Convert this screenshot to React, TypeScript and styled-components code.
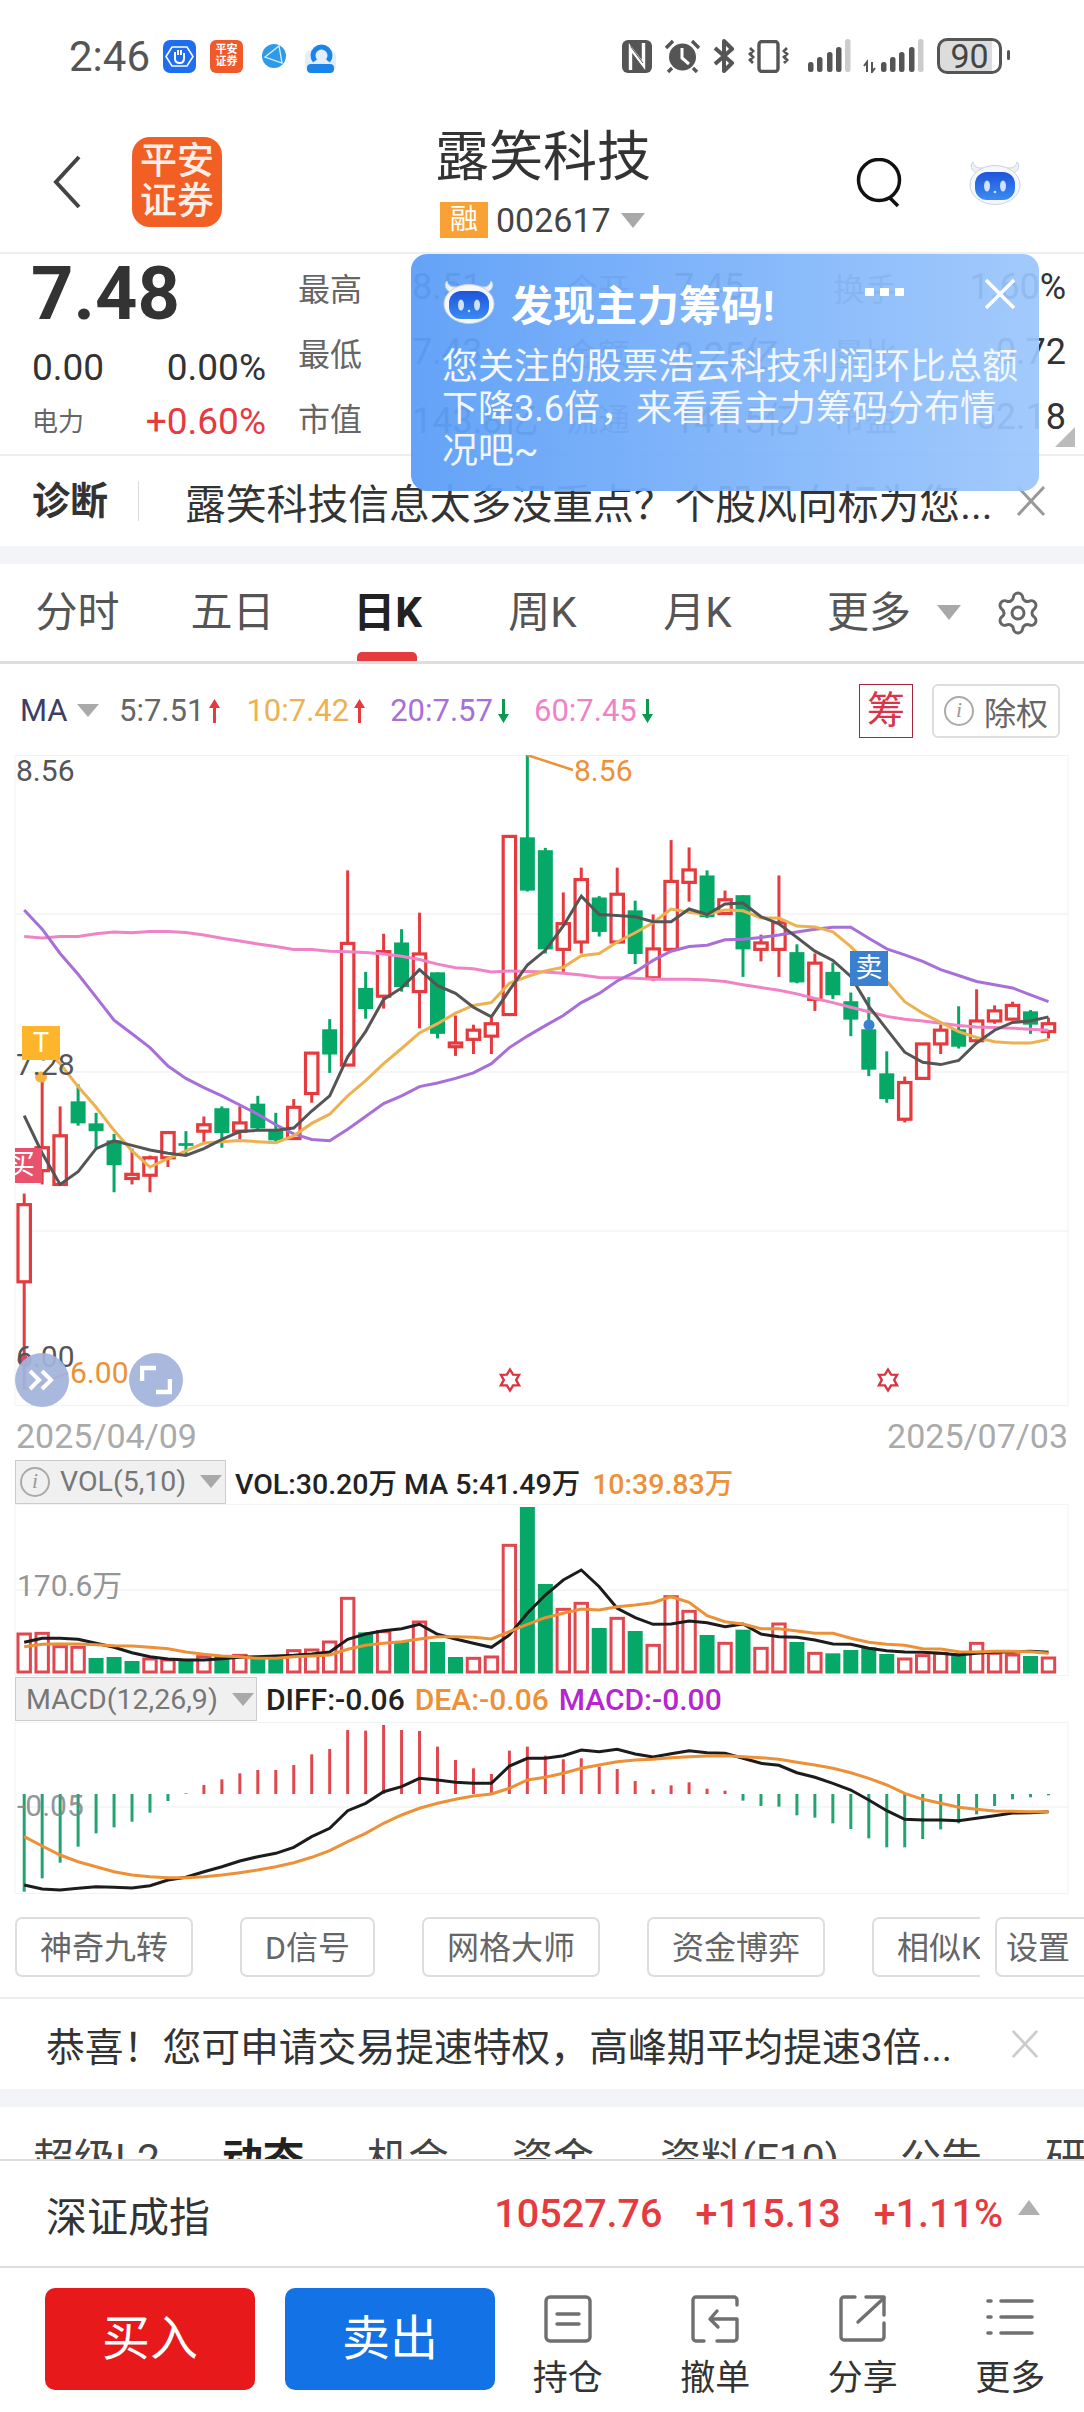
import * as React from "react";
import styled, { createGlobalStyle } from "styled-components";
import { Settings } from "lucide-react";

const GlobalStyle = createGlobalStyle`
  html, body {
    margin: 0;
    padding: 0;
    background: #fff;
  }
  * {
    box-sizing: border-box;
  }
`;

const RED = "#e53b3e";
const GREEN = "#06a868";
const ORANGE = "#ec9137";

// chart data was read off the reference: [isRed, high, bodyTop, bodyBottom, low]
const candles: number[][] = [
  [1, 988, 1012, 1180, 1415], [1, 735, 888, 938, 968], [1, 798, 862, 968, 968], [0, 750, 787, 835, 840],
  [0, 812, 835, 852, 890], [0, 858, 872, 926, 985], [1, 890, 946, 955, 968], [1, 905, 910, 948, 985],
  [1, 855, 855, 910, 930], [0, 852, 878, 884, 905], [1, 820, 838, 852, 880], [0, 798, 802, 856, 888],
  [1, 798, 834, 852, 870], [0, 775, 792, 846, 850], [0, 812, 848, 872, 875], [1, 782, 800, 868, 870],
  [1, 682, 682, 770, 790], [0, 608, 630, 685, 725], [1, 284, 443, 708, 708], [0, 505, 540, 586, 607],
  [1, 422, 461, 558, 585], [0, 412, 441, 538, 548], [1, 376, 466, 548, 628], [0, 506, 506, 640, 650],
  [1, 600, 660, 668, 688], [1, 620, 632, 652, 684], [1, 605, 618, 645, 684], [1, 210, 210, 598, 598],
  [0, 33, 212, 328, 330], [0, 235, 240, 456, 465], [1, 332, 400, 456, 505], [1, 278, 304, 440, 465],
  [0, 340, 343, 418, 428], [1, 278, 336, 440, 442], [0, 350, 371, 466, 488], [1, 380, 455, 518, 525],
  [1, 218, 308, 456, 460], [1, 234, 283, 310, 352], [0, 284, 295, 386, 388], [1, 328, 348, 378, 380],
  [0, 338, 338, 456, 516], [1, 424, 442, 456, 482], [1, 295, 398, 456, 516], [0, 445, 462, 528, 530],
  [1, 465, 486, 565, 590], [0, 485, 505, 556, 564], [0, 550, 569, 609, 645], [0, 560, 630, 718, 732],
  [0, 678, 726, 782, 790], [1, 733, 746, 826, 833], [1, 660, 662, 737, 737], [1, 620, 632, 662, 684],
  [0, 580, 630, 668, 672], [1, 543, 612, 655, 658], [1, 578, 590, 612, 618], [1, 570, 578, 608, 610],
  [0, 588, 591, 620, 640], [1, 605, 618, 635, 650]
];

const ma5 = [818, 900, 968, 940, 890, 873, 883, 893, 900, 905, 890, 870, 853, 850, 850, 845, 808, 775, 690, 635, 565, 540, 500, 535, 552, 582, 603, 545, 490, 458, 405, 340, 380, 382, 385, 396, 396, 368, 380, 357, 355, 385, 400, 430, 460, 480, 515, 580, 630, 680, 702, 707, 698, 660, 632, 615, 612, 603];
const ma10 = [670, 705, 755, 800, 850, 895, 930, 912, 895, 878, 875, 872, 875, 877, 862, 835, 815, 775, 742, 705, 672, 638, 618, 595, 578, 572, 530, 515, 503, 495, 470, 465, 440, 420, 398, 368, 375, 380, 370, 372, 388, 388, 405, 407, 418, 450, 490, 525, 570, 595, 615, 635, 648, 657, 660, 660, 652];
const ma20 = [370, 412, 465, 510, 560, 610, 640, 670, 710, 737, 757, 775, 795, 815, 838, 858, 870, 873, 848, 820, 792, 775, 755, 747, 737, 725, 705, 670, 645, 622, 600, 572, 552, 525, 505, 480, 460, 450, 447, 435, 434, 430, 425, 418, 412, 408, 408, 432, 455, 468, 482, 500, 513, 526, 533, 540, 555, 570];
const ma60 = [428, 431, 428, 428, 422, 418, 420, 417, 417, 419, 425, 432, 438, 444, 450, 456, 456, 460, 461, 463, 466, 471, 478, 488, 496, 498, 505, 503, 504, 505, 508, 512, 517, 518, 519, 521, 521, 521, 523, 526, 533, 539, 545, 553, 563, 572, 582, 592, 602, 608, 612, 617, 622, 625, 626, 628, 630, 632];

// [isRed, top]
const volumes: number[][] = [
  [1, 582], [1, 580], [1, 620], [1, 622], [0, 654], [0, 651], [0, 663], [1, 657], [1, 660], [0, 660],
  [1, 650], [0, 645], [1, 646], [0, 650], [0, 655], [1, 632], [1, 630], [1, 606], [1, 475], [0, 577],
  [1, 575], [0, 605], [1, 546], [0, 606], [0, 651], [1, 655], [1, 651], [1, 316], [0, 201], [0, 432],
  [1, 508], [1, 490], [0, 564], [1, 535], [0, 573], [1, 616], [1, 470], [1, 514], [0, 585], [1, 610],
  [0, 569], [1, 625], [1, 552], [0, 606], [1, 640], [0, 640], [0, 630], [0, 622], [0, 642], [1, 657],
  [1, 647], [1, 640], [0, 640], [1, 610], [1, 640], [1, 645], [0, 648], [1, 654]
];
const volMa5 = [607, 595, 595, 598, 610, 622, 638, 650, 657, 660, 660, 656, 652, 650, 648, 646, 642, 636, 598, 582, 572, 566, 553, 583, 597, 610, 622, 585, 520, 465, 420, 390, 440, 505, 533, 553, 552, 543, 548, 560, 552, 582, 590, 592, 600, 612, 613, 625, 632, 636, 637, 640, 645, 640, 636, 636, 634, 637];
const volMa10 = [620, 613, 612, 612, 614, 617, 618, 622, 626, 636, 643, 648, 650, 655, 655, 650, 648, 645, 628, 616, 610, 605, 597, 590, 590, 592, 597, 575, 553, 533, 520, 507, 510, 500, 495, 488, 470, 487, 527, 545, 552, 566, 566, 573, 580, 580, 595, 607, 613, 616, 626, 627, 635, 636, 634, 634, 635, 640];

const macdBars = [1355, 1315, 1268, 1220, 1180, 1162, 1145, 1118, 1083, 1060, 1035, 1018, 1000, 990, 990, 975, 943, 927, 870, 872, 855, 870, 873, 920, 960, 985, 1002, 932, 920, 947, 958, 955, 980, 987, 1023, 1048, 1036, 1027, 1046, 1052, 1082, 1098, 1100, 1126, 1133, 1150, 1167, 1195, 1222, 1222, 1197, 1168, 1150, 1123, 1098, 1078, 1072, 1066];
const diff = [1335, 1347, 1350, 1345, 1340, 1342, 1344, 1337, 1320, 1312, 1295, 1280, 1263, 1250, 1240, 1222, 1190, 1165, 1112, 1090, 1055, 1040, 1015, 1020, 1027, 1030, 1030, 978, 955, 955, 947, 930, 935, 928, 942, 951, 941, 932, 938, 940, 955, 970, 976, 998, 1012, 1030, 1050, 1080, 1112, 1138, 1140, 1140, 1142, 1135, 1127, 1119, 1118, 1115];
const dea = [1190, 1218, 1245, 1265, 1280, 1295, 1305, 1310, 1313, 1313, 1310, 1305, 1298, 1290, 1280, 1268, 1252, 1232, 1205, 1180, 1150, 1125, 1105, 1090, 1078, 1068, 1062, 1045, 1020, 1012, 1000, 985, 975, 965, 960, 958, 953, 950, 948, 947, 950, 953, 958, 967, 975, 985, 998, 1015, 1035, 1060, 1078, 1090, 1102, 1108, 1113, 1114, 1115, 1115];

const slotX = (i: number) => 24.2 + 17.97 * i;
const priceY = (z: number) => 740 + z / 2.178;
const lowerY = (z: number) => 1440 + z / 3;

const linePoints = (values: number[], toY: (z: number) => number, start = 0) =>
  values.map((v, i) => `${slotX(i + start).toFixed(1)},${toY(v).toFixed(1)}`).join(" ");

const starPoints = (cx: number, cy: number) => {
  const pts: string[] = [];
  for (let i = 0; i < 12; i++) {
    const r = i % 2 === 0 ? 10.5 : 6.2;
    const a = (Math.PI / 6) * i - Math.PI / 2;
    pts.push(`${(cx + r * Math.cos(a)).toFixed(1)},${(cy + r * Math.sin(a)).toFixed(1)}`);
  }
  return pts.join(" ");
};

const Page = styled.div`
  position: relative;
  width: 1084px;
  height: 2412px;
  overflow: hidden;
  background: #fff;
  font-family: Roboto, "Noto Sans CJK SC", sans-serif;
  color: #333;
`;

const StatusBar = styled.div`
  height: 112px;
  display: flex;
  align-items: center;
  padding: 0 0 0 69px;
`;
const Clock = styled.div`
  font-size: 42px;
  color: #555;
  width: 94px;
`;
const AppIcons = styled.div`
  display: flex;
  align-items: center;
  gap: 14px;
`;
const OrangeApp = styled.div`
  width: 33px;
  height: 33px;
  border-radius: 6px;
  background: #f0592a;
  color: #fff;
  font-size: 11px;
  line-height: 12px;
  font-weight: 700;
  text-align: center;
  padding-top: 4px;
`;
const StatusIcons = styled.div`
  margin-left: auto;
  margin-right: 82px;
  display: flex;
  align-items: center;
  gap: 12px;
`;
const Battery = styled.div`
  position: relative;
  width: 65px;
  height: 36px;
  margin-left: 1px;
  border: 3px solid #555;
  border-radius: 10px;
  background: linear-gradient(90deg, #dcdcdc 88%, #fff 88%);
  color: #444;
  font-size: 34px;
  line-height: 30px;
  text-align: center;
  &::after {
    content: "";
    position: absolute;
    right: -11px;
    top: 9px;
    width: 3px;
    height: 10px;
    background: #555;
    border-radius: 2px;
  }
`;

const Header = styled.header`
  height: 142px;
  display: flex;
  align-items: flex-start;
  border-bottom: 2px solid #eee;
  padding-left: 52px;
`;
const BackMark = styled.svg`
  width: 30px;
  height: 54px;
  margin-top: 43px;
`;
const Logo = styled.div`
  width: 90px;
  height: 90px;
  margin: 25px 0 0 50px;
  border-radius: 18px;
  background: #f15f25;
  color: #fdeee7;
  font-size: 37px;
  font-weight: 500;
  line-height: 40px;
  text-align: center;
  padding-top: 5px;
`;
const TitleBlock = styled.div`
  margin-left: 213px;
  width: 300px;
`;
const Title = styled.h1`
  margin: 14px 0 0;
  font-size: 54px;
  font-weight: 400;
  line-height: 64px;
  color: #333;
`;
const CodeRow = styled.div`
  display: flex;
  align-items: center;
  margin: 12px 0 0 5px;
`;
const MarginTag = styled.span`
  width: 48px;
  height: 36px;
  background: #f9a134;
  color: #fff;
  font-size: 28px;
  line-height: 36px;
  text-align: center;
`;
const Code = styled.span`
  margin-left: 8px;
  font-size: 34px;
  line-height: 36px;
  color: #444;
`;
const Caret = styled.i<{ $size?: number; $color?: string; $gap?: number }>`
  display: inline-block;
  flex: none;
  width: 0;
  height: 0;
  margin-left: ${(p) => p.$gap ?? 10}px;
  border-left: ${(p) => p.$size ?? 12}px solid transparent;
  border-right: ${(p) => p.$size ?? 12}px solid transparent;
  border-top: ${(p) => (p.$size ?? 12) * 1.25}px solid ${(p) => p.$color ?? "#a9a9a9"};
`;
const HeaderActions = styled.div`
  margin-left: auto;
  margin-right: 62px;
  display: flex;
  align-items: center;
  gap: 64px;
  padding-top: 46px;
`;

const Quote = styled.section`
  position: relative;
  height: 202px;
  display: flex;
  border-bottom: 2px solid #eee;
  padding-left: 32px;
`;
const PriceBlock = styled.div`
  width: 234px;
  margin-right: 32px;
`;
const Price = styled.div`
  font-size: 74px;
  font-weight: 700;
  line-height: 76px;
  margin: 2px 0 0 -1px;
  color: #333;
`;
const ChangeRow = styled.div`
  display: flex;
  justify-content: space-between;
  align-items: center;
  color: #333;
  font-size: 37px;
  line-height: 44px;
  margin-top: 14px;
`;
const SectorRow = styled.div`
  display: flex;
  justify-content: space-between;
  align-items: center;
  line-height: 44px;
  margin-top: 10px;
`;
const SectorName = styled.span`
  font-size: 26px;
  color: #666;
`;
const SectorRise = styled.span`
  font-size: 37px;
  color: ${RED};
`;
const QuoteGrid = styled.div`
  width: 768px;
  display: grid;
  grid-template-columns: 114px 154px 108px 159px 90px 143px;
  grid-auto-rows: 65px;
  align-items: center;
`;
const QuoteLabel = styled.span`
  font-size: 32px;
  color: #666;
`;
const QuoteValue = styled.span<{ $end?: boolean }>`
  font-size: 36px;
  color: #333;
  text-align: ${(p) => (p.$end ? "right" : "left")};
`;
const CornerMark = styled.i`
  position: absolute;
  right: 9px;
  bottom: 7px;
  width: 20px;
  height: 20px;
  background: #bbb;
  clip-path: polygon(100% 0, 100% 100%, 0 100%);
`;

const Diagnosis = styled.section`
  height: 90px;
  display: flex;
  align-items: center;
  padding: 0 37px 0 32px;
  font-size: 40.8px;
  color: #333;
`;
const DiagnosisTag = styled.strong`
  font-size: 38px;
  font-weight: 700;
  padding-right: 30px;
  border-right: 1px solid #ddd;
  line-height: 40px;
`;
const DiagnosisText = styled.span`
  margin-left: 46px;
  white-space: nowrap;
`;
const CloseIcon = styled.svg<{ $push?: boolean }>`
  flex: none;
  margin-left: ${(p) => (p.$push ? "auto" : "0")};
`;
const Band = styled.div`
  height: 18px;
  background: #f3f4f8;
`;

const TabBar = styled.nav`
  height: 100px;
  display: flex;
  align-items: center;
  border-bottom: 3px solid #ddd;
`;
const Tab = styled.div<{ $active?: boolean }>`
  position: relative;
  width: 155px;
  text-align: center;
  font-size: 42px;
  line-height: 60px;
  color: ${(p) => (p.$active ? "#222" : "#555")};
  font-weight: ${(p) => (p.$active ? 700 : 400)};
  &::after {
    content: "";
    display: ${(p) => (p.$active ? "block" : "none")};
    position: absolute;
    left: 50%;
    margin-left: -31px;
    bottom: -18px;
    width: 60px;
    height: 9px;
    border-radius: 5px 5px 0 0;
    background: ${RED};
  }
`;
const MoreTab = styled.div`
  margin-left: 52px;
  font-size: 42px;
  line-height: 60px;
  color: #555;
  width: 80px;
  white-space: nowrap;
`;
const GearWrap = styled.div`
  margin-left: 33px;
  display: flex;
  color: #666;
`;

const MaRow = styled.div`
  height: 91px;
  display: flex;
  align-items: center;
  padding: 2px 24px 0 20px;
  font-size: 31px;
`;
const MaName = styled.span`
  color: #3d3d66;
  width: 45px;
`;
const MaValue = styled.span<{ $color: string; $gap: number }>`
  color: ${(p) => p.$color};
  margin-left: ${(p) => p.$gap}px;
  white-space: nowrap;
`;
const ArrowMark = styled.svg`
  flex: none;
  margin-left: 4px;
`;
const ChipButton = styled.div`
  margin-left: auto;
  width: 54px;
  height: 54px;
  border: 1px solid #a8263c;
  color: #d8354a;
  font-size: 38px;
  line-height: 50px;
  text-align: center;
`;
const RightButton = styled.div`
  margin-left: 19px;
  width: 128px;
  height: 54px;
  border: 2px solid #ddd;
  border-radius: 6px;
  display: flex;
  align-items: center;
  justify-content: center;
  gap: 10px;
  color: #666;
  font-size: 32px;
`;
const InfoMark = styled.i<{ $size: number }>`
  flex: none;
  display: inline-flex;
  align-items: center;
  justify-content: center;
  width: ${(p) => p.$size}px;
  height: ${(p) => p.$size}px;
  border: 2px solid #aaa;
  border-radius: 50%;
  color: #999;
  font-family: "Liberation Serif", serif;
  font-size: ${(p) => p.$size * 0.72}px;
  font-style: italic;
`;

const ChartArea = styled.div`
  position: relative;
  height: 651px;
`;
const ChartSvg = styled.svg`
  display: block;
`;
const AxisLabel = styled.span<{ $x: number; $y: number; $color?: string }>`
  position: absolute;
  left: ${(p) => p.$x}px;
  top: ${(p) => p.$y}px;
  font-size: 30px;
  line-height: 30px;
  color: ${(p) => p.$color ?? "#555"};
`;
const Signal = styled.span<{ $x: number; $y: number; $w: number; $h: number; $color: string; $clip?: boolean }>`
  position: absolute;
  left: ${(p) => p.$x}px;
  top: ${(p) => p.$y}px;
  width: ${(p) => p.$w}px;
  height: ${(p) => p.$h}px;
  background: ${(p) => p.$color};
  color: #fff;
  font-size: 27px;
  line-height: ${(p) => p.$h}px;
  display: flex;
  justify-content: ${(p) => (p.$clip ? "flex-start" : "center")};
  overflow: hidden;
`;
const ClippedGlyph = styled.span`
  flex: none;
  margin-left: -7px;
`;
const RoundControl = styled.div<{ $x: number }>`
  position: absolute;
  left: ${(p) => p.$x}px;
  top: 598px;
  width: 54px;
  height: 54px;
  border-radius: 50%;
  background: rgba(163, 180, 219, 0.93);
  display: flex;
  align-items: center;
  justify-content: center;
`;
const DateRow = styled.div`
  height: 53px;
  display: flex;
  justify-content: space-between;
  padding: 12px 16px 0;
  font-size: 34px;
  line-height: 36px;
  color: #aaa;
`;
const LegendRow = styled.div<{ $h: number; $size: number }>`
  height: ${(p) => p.$h}px;
  display: flex;
  align-items: center;
  padding-left: 15px;
  font-size: ${(p) => p.$size}px;
`;
const IndicatorBox = styled.div<{ $w: number; $inset: number }>`
  width: ${(p) => p.$w}px;
  height: 44px;
  flex: none;
  display: flex;
  align-items: center;
  gap: 10px;
  padding-left: ${(p) => p.$inset}px;
  background: #f0f0f0;
  border: 1px solid #ccc;
  color: #777;
  margin-right: 9px;
`;
const IndicatorName = styled.span`
  font-size: 28.5px;
  white-space: nowrap;
`;
const LegendText = styled.span<{ $color?: string; $gap?: number }>`
  color: ${(p) => p.$color ?? "#222"};
  margin-left: ${(p) => p.$gap ?? 0}px;
  white-space: nowrap;
  font-weight: 500;
`;
const LowerChart = styled.div`
  position: relative;
  height: 172px;
`;
const LowerLabel = styled.span<{ $y: number }>`
  position: absolute;
  left: 17px;
  top: ${(p) => p.$y}px;
  font-size: 30px;
  line-height: 30px;
  color: rgba(130, 130, 130, 0.85);
`;

const ToolRow = styled.div`
  display: flex;
  padding: 23px 0 0 15px;
  height: 105px;
  border-bottom: 2px solid #eee;
  overflow: hidden;
`;
const Tool = styled.div`
  height: 60px;
  padding: 0 23px;
  margin-right: 47px;
  flex: none;
  border: 2px solid #ddd;
  border-radius: 7px;
  color: #666;
  font-size: 32px;
  line-height: 58px;
  white-space: nowrap;
`;
const ClippedTool = styled(Tool)`
  width: 108px;
  margin-right: 15px;
  overflow: hidden;
  border-right: 0;
  border-radius: 7px 0 0 7px;
`;
const SettingTool = styled(Tool)`
  width: 100px;
  padding: 0 9px;
  margin-right: 0;
`;
const Notice = styled.div`
  height: 90px;
  display: flex;
  align-items: center;
  padding: 0 44px 0 46px;
  font-size: 38.8px;
  color: #333;
  white-space: nowrap;
`;
const SubTabs = styled.div`
  height: 52px;
  overflow: hidden;
  display: flex;
  padding: 24px 0 0 33px;
  font-size: 41px;
  line-height: 56px;
  color: #444;
  white-space: nowrap;
`;
const SubTab = styled.span<{ $w: number; $active?: boolean }>`
  flex: none;
  width: ${(p) => p.$w}px;
  font-weight: ${(p) => (p.$active ? 700 : 400)};
  color: ${(p) => (p.$active ? "#222" : "#444")};
`;
const IndexBar = styled.div`
  height: 107px;
  display: flex;
  align-items: center;
  border-top: 2px solid #ddd;
  padding: 0 44px 0 46px;
`;
const IndexName = styled.span`
  font-size: 41px;
  color: #333;
`;
const IndexFigure = styled.span<{ $first?: boolean }>`
  margin-left: ${(p) => (p.$first ? "auto" : "33px")};
  font-size: 39.5px;
  font-weight: 500;
  color: ${RED};
`;
const UpMark = styled.i`
  width: 0;
  height: 0;
  margin: 0 0 12px 15px;
  border-left: 11px solid transparent;
  border-right: 11px solid transparent;
  border-bottom: 15px solid #b0b0b0;
`;
const ActionBar = styled.div`
  height: 144px;
  display: flex;
  align-items: flex-start;
  border-top: 2px solid #ddd;
  padding: 20px 0 0 45px;
`;
const TradeButton = styled.div<{ $color: string }>`
  flex: none;
  width: 210px;
  height: 102px;
  margin-right: 30px;
  border-radius: 10px;
  background: ${(p) => p.$color};
  color: #fff;
  font-size: 48px;
  line-height: 102px;
  text-align: center;
`;
const ActionItem = styled.div<{ $first?: boolean }>`
  width: 147.5px;
  margin-left: ${(p) => (p.$first ? "-31px" : "0")};
  display: flex;
  flex-direction: column;
  align-items: center;
  padding-top: 7px;
  font-size: 35px;
  line-height: 40px;
  color: #333;
`;
const ActionIcon = styled.svg`
  display: block;
  margin-bottom: 16px;
`;

const Tip = styled.aside`
  position: absolute;
  left: 411px;
  top: 254px;
  width: 628px;
  height: 237px;
  border-radius: 16px;
  background: linear-gradient(90deg, rgba(92, 158, 247, 0.95), rgba(155, 198, 252, 0.93));
  color: #fff;
  padding: 23px 20px 0 31px;
`;
const TipHead = styled.div`
  display: flex;
  align-items: center;
  height: 50px;
`;
const TipTitle = styled.strong`
  margin-left: 15px;
  font-size: 42px;
  font-weight: 700;
`;
const TipDots = styled.span`
  position: absolute;
  left: 454px;
  top: 34px;
  display: flex;
  gap: 6px;
  & > i {
    width: 9px;
    height: 8px;
    background: #fff;
  }
`;
const TipClose = styled.svg`
  position: absolute;
  left: 573px;
  top: 24px;
`;
const TipBody = styled.p`
  margin: 19px 0 0;
  font-size: 36px;
  line-height: 42px;
  white-space: nowrap;
  color: #f2f7ff;
`;

function Close(props: { size: number; color: string; push?: boolean }) {
  return (
    <CloseIcon $push={props.push} width={props.size} height={props.size} viewBox="0 0 32 32">
      <path d="M3 2L29 30M29 2L3 30" stroke={props.color} strokeWidth="3" fill="none" />
    </CloseIcon>
  );
}

function Robot({ size }: { size: number }) {
  const gradId = `robot-screen-${size}`;
  return (
    <svg width={size} height={(size * 44) / 54} viewBox="0 0 54 44">
      <defs>
        <linearGradient id={gradId} x1="0" y1="0" x2="0" y2="1">
          <stop offset="0" stopColor="#1d54db" />
          <stop offset="1" stopColor="#3b8bf2" />
        </linearGradient>
      </defs>
      <path d="M5 1c-3 3-2 8 3 11h38c5-3 6-8 3-11-1 4-4 6-7 6H12C9 7 6 5 5 1z" fill="#eef2f7" stroke="#c9d2e0" />
      <ellipse cx="27" cy="24" rx="25" ry="19.5" fill="#f5f7fb" stroke="#cbd3e2" />
      <rect x="7" y="11" width="40" height="28" rx="12" fill={`url(#${gradId})`} />
      <ellipse cx="19" cy="25" rx="3" ry="5.5" fill="#cfe2ff" />
      <ellipse cx="35" cy="25" rx="3" ry="5.5" fill="#cfe2ff" />
      <circle cx="27" cy="31" r="1.3" fill="#cfe2ff" />
    </svg>
  );
}

function StatusGlyphs() {
  return (
    <StatusIcons>
      <svg width="30" height="33" viewBox="0 0 30 33">
        <rect x="0" y="0" width="30" height="33" rx="6" fill="#555" />
        <path d="M8.5 30V8l13 17V3" stroke="#fff" strokeWidth="3.4" fill="none" />
        <path d="M9 3v4l12 16" stroke="#555" strokeWidth="1" fill="none" />
      </svg>
      <svg width="37" height="34" viewBox="0 0 37 34">
        <circle cx="18.5" cy="18" r="13.5" fill="#555" />
        <path d="M18 9v10l7 6" stroke="#fff" strokeWidth="3" fill="none" />
        <path d="M2 9l7-7M35 9l-7-7M8 29l-4 4M29 29l4 4" stroke="#555" strokeWidth="3.4" fill="none" />
      </svg>
      <svg width="22" height="34" viewBox="0 0 22 34">
        <path d="M2 9l17 15-8 8V2l8 8L2 25" stroke="#555" strokeWidth="4" fill="none" strokeLinejoin="round" />
      </svg>
      <svg width="43" height="33" viewBox="0 0 43 33">
        <rect x="12" y="1.5" width="19" height="30" rx="3" stroke="#555" strokeWidth="3.4" fill="none" />
        <path d="M3 8l3 3-3 3 3 3-3 3 3 3M40 8l-3 3 3 3-3 3 3 3-3 3" stroke="#555" strokeWidth="2.8" fill="none" />
      </svg>
      <svg width="43" height="34" viewBox="0 0 43 34" style={{ marginLeft: 6 }}>
        <g fill="#555">
          <rect x="0" y="23" width="5.5" height="10" rx="2.5" />
          <rect x="9" y="18" width="5.5" height="15" rx="2.5" />
          <rect x="19" y="13" width="5.5" height="20" rx="2.5" />
          <rect x="28" y="8" width="5.5" height="25" rx="2.5" />
        </g>
        <rect x="37" y="0" width="5.5" height="33" rx="2.5" fill="#ccc" />
      </svg>
      <svg width="61" height="34" viewBox="0 0 61 34">
        <path d="M4 33V23l-3 4M9 23v10l3-4" stroke="#555" strokeWidth="2" fill="none" />
        <g fill="#555">
          <rect x="18" y="23" width="5.5" height="10" rx="2.5" />
          <rect x="27" y="18" width="5.5" height="15" rx="2.5" />
          <rect x="36" y="13" width="5.5" height="20" rx="2.5" />
          <rect x="46" y="8" width="5.5" height="25" rx="2.5" />
        </g>
        <rect x="55" y="0" width="5.5" height="33" rx="2.5" fill="#ccc" />
      </svg>
      <Battery>90</Battery>
    </StatusIcons>
  );
}

function PriceChart() {
  return (
    <ChartArea>
      <ChartSvg width="1084" height="651" viewBox="0 755 1084 651">
        <rect x="15" y="755.5" width="1053" height="650" fill="none" stroke="#f3f3f3" />
        {[914, 1072, 1231].map((y) => (
          <line key={y} x1="15" x2="1068" y1={y} y2={y} stroke="#f3f3f3" strokeWidth="1.5" />
        ))}
        {candles.map(([up, high, top, bottom, low], i) => {
          const x = slotX(i);
          const color = up ? RED : GREEN;
          return (
            <g key={i}>
              <line x1={x} x2={x} y1={priceY(high)} y2={priceY(low)} stroke={color} strokeWidth="3" />
              {up ? (
                <rect x={x - 6.2} y={priceY(top)} width="12.4" height={priceY(bottom) - priceY(top)} fill="#fff" stroke={color} strokeWidth="3.2" />
              ) : (
                <rect x={x - 7.5} y={priceY(top)} width="15" height={priceY(bottom) - priceY(top)} fill={color} />
              )}
            </g>
          );
        })}
        <polyline points={linePoints(ma60, priceY)} fill="none" stroke="#ef83c6" strokeWidth="3" />
        <polyline points={linePoints(ma20, priceY)} fill="none" stroke="#a86fd8" strokeWidth="3" />
        <polyline points={linePoints(ma10, priceY, 1)} fill="none" stroke="#edb24f" strokeWidth="3" />
        <polyline points={linePoints(ma5, priceY)} fill="none" stroke="#555" strokeWidth="3" />
        <polyline points="527,755 573,770" fill="none" stroke={ORANGE} strokeWidth="2.5" />
        <polyline points="24,1390 68,1373" fill="none" stroke={ORANGE} strokeWidth="2.5" />
        <ellipse cx="41" cy="1077" rx="6" ry="5.5" fill="#f5b33c" />
        <ellipse cx="869" cy="1025" rx="5.5" ry="5.5" fill="#3a80d0" />
        <ellipse cx="23" cy="1360" rx="5.5" ry="5.5" fill="#d9486a" />
        <polygon points={starPoints(510, 1380)} fill="#fff" stroke="#d93440" strokeWidth="2.4" />
        <polygon points={starPoints(888, 1380)} fill="#fff" stroke="#d93440" strokeWidth="2.4" />
      </ChartSvg>
      <AxisLabel $x={16} $y={1}>8.56</AxisLabel>
      <AxisLabel $x={16} $y={295}>7.28</AxisLabel>
      <AxisLabel $x={16} $y={587}>6.00</AxisLabel>
      <AxisLabel $x={574} $y={1} $color={ORANGE}>8.56</AxisLabel>
      <AxisLabel $x={70} $y={603} $color={ORANGE}>6.00</AxisLabel>
      <Signal $x={22} $y={271} $w={38} $h={34} $color="#fdb52c">T</Signal>
      <Signal $x={15} $y={393} $w={27} $h={35} $color="#e8526c" $clip>
        <ClippedGlyph>买</ClippedGlyph>
      </Signal>
      <Signal $x={850} $y={196} $w={38} $h={35} $color="#3a80d0">卖</Signal>
      <RoundControl $x={15}>
        <svg width="30" height="22" viewBox="0 0 30 22">
          <path d="M3 2l9 9-9 9M15 2l9 9-9 9" stroke="#fff" strokeWidth="4" fill="none" />
        </svg>
      </RoundControl>
      <RoundControl $x={129}>
        <svg width="32" height="30" viewBox="0 0 32 30">
          <path d="M2 16V3h14M30 14v13H16" stroke="#fff" strokeWidth="4.5" fill="none" />
        </svg>
      </RoundControl>
    </ChartArea>
  );
}

function VolumeChart() {
  return (
    <LowerChart>
      <ChartSvg width="1084" height="172" viewBox="0 1504 1084 172">
        <rect x="15" y="1504.5" width="1053" height="171" fill="none" stroke="#f3f3f3" />
        <line x1="15" x2="1068" y1="1590" y2="1590" stroke="#f3f3f3" strokeWidth="1.5" />
        {volumes.map(([up, top], i) => {
          const x = slotX(i);
          const y = lowerY(top);
          return up ? (
            <rect key={i} x={x - 6.2} y={y} width="12.4" height={1672 - y} fill="#fff" stroke="#e0474f" strokeWidth="3" />
          ) : (
            <rect key={i} x={x - 7.5} y={y} width="15" height={1673.5 - y} fill={GREEN} />
          );
        })}
        <polyline points={linePoints(volMa5, lowerY)} fill="none" stroke="#1c1c1c" strokeWidth="3" />
        <polyline points={linePoints(volMa10, lowerY)} fill="none" stroke={ORANGE} strokeWidth="3" />
      </ChartSvg>
      <LowerLabel $y={67}>170.6万</LowerLabel>
    </LowerChart>
  );
}

function MacdChart() {
  const zero = 1062;
  return (
    <LowerChart>
      <ChartSvg width="1084" height="172" viewBox="0 1722 1084 172">
        <rect x="15" y="1722.5" width="1053" height="171" fill="none" stroke="#f3f3f3" />
        <line x1="15" x2="1068" y1="1807" y2="1807" stroke="#f3f3f3" strokeWidth="1.5" />
        {macdBars.map((z, i) => (
          <line
            key={i}
            x1={slotX(i)}
            x2={slotX(i)}
            y1={lowerY(zero)}
            y2={lowerY(z)}
            stroke={z > zero ? "#22a471" : "#e0474f"}
            strokeWidth="3"
          />
        ))}
        <polyline points={linePoints(diff, lowerY)} fill="none" stroke="#1c1c1c" strokeWidth="3" />
        <polyline points={linePoints(dea, lowerY)} fill="none" stroke={ORANGE} strokeWidth="3" />
      </ChartSvg>
      <LowerLabel $y={69}>-0.05</LowerLabel>
    </LowerChart>
  );
}

function Arrow({ up }: { up: boolean }) {
  const color = up ? "#e53b3e" : "#0c9a4e";
  return (
    <ArrowMark width="13" height="26" viewBox="0 0 13 26">
      {up ? (
        <path d="M6.5 1L12 10H8v15H5V10H1z" fill={color} />
      ) : (
        <path d="M6.5 25L12 16H8V1H5v15H1z" fill={color} />
      )}
    </ArrowMark>
  );
}

export default function App(): React.ReactElement {
  return (
    <Page>
      <GlobalStyle />
      <StatusBar>
        <Clock>2:46</Clock>
        <AppIcons>
          <svg width="33" height="33" viewBox="0 0 33 33">
            <rect width="33" height="33" rx="7" fill="#1f6df0" />
            <path d="M9 7h15l6 9.5-6 9.5H9l-6-9.5z" fill="none" stroke="#fff" strokeWidth="1.6" />
            <path d="M12 16v-4M15 15v-5M18 15v-5M21 16v-3M12 15v4c0 3 2 4 5 4s4-2 4-5v-3" stroke="#fff" strokeWidth="2" fill="none" />
          </svg>
          <OrangeApp>平安<br />证券</OrangeApp>
          <svg width="24" height="26" viewBox="0 0 24 26" style={{ marginLeft: 5 }}>
            <circle cx="12" cy="13" r="12" fill="#2f9be8" />
            <path d="M3 14L17 3l3 17z" fill="none" stroke="#d8f0ff" strokeWidth="1.3" />
          </svg>
          <svg width="33" height="33" viewBox="0 0 33 33" style={{ marginLeft: 4 }}>
            <rect x="1" y="10" width="31" height="22" rx="6" fill="#e3eefa" />
            <path d="M11 21a8.5 8.5 0 1 1 13 0" stroke="#1c84e8" strokeWidth="5" fill="none" />
            <rect x="3" y="24" width="27" height="9" rx="4" fill="#1c84e8" />
          </svg>
        </AppIcons>
        <StatusGlyphs />
      </StatusBar>

      <Header>
        <BackMark viewBox="0 0 30 54">
          <path d="M27 2L4 27l23 25" stroke="#444" strokeWidth="4" fill="none" />
        </BackMark>
        <Logo>平安<br />证券</Logo>
        <TitleBlock>
          <Title>露笑科技</Title>
          <CodeRow>
            <MarginTag>融</MarginTag>
            <Code>002617</Code>
            <Caret $size={12} $gap={10} />
          </CodeRow>
        </TitleBlock>
        <HeaderActions>
          <svg width="48" height="50" viewBox="0 0 48 50">
            <circle cx="23" cy="22" r="20.5" fill="none" stroke="#111" strokeWidth="3.5" />
            <path d="M34 40l8 8" stroke="#111" strokeWidth="3.5" />
          </svg>
          <Robot size={54} />
        </HeaderActions>
      </Header>

      <Quote>
        <PriceBlock>
          <Price>7.48</Price>
          <ChangeRow>
            <span>0.00</span>
            <span>0.00%</span>
          </ChangeRow>
          <SectorRow>
            <SectorName>电力</SectorName>
            <SectorRise>+0.60%</SectorRise>
          </SectorRow>
        </PriceBlock>
        <QuoteGrid>
          <QuoteLabel>最高</QuoteLabel>
          <QuoteValue>8.51</QuoteValue>
          <QuoteLabel>今开</QuoteLabel>
          <QuoteValue>7.45</QuoteValue>
          <QuoteLabel>换手</QuoteLabel>
          <QuoteValue $end>1.60%</QuoteValue>
          <QuoteLabel>最低</QuoteLabel>
          <QuoteValue>7.43</QuoteValue>
          <QuoteLabel>金额</QuoteLabel>
          <QuoteValue>2.25亿</QuoteValue>
          <QuoteLabel>量比</QuoteLabel>
          <QuoteValue $end>0.72</QuoteValue>
          <QuoteLabel>市值</QuoteLabel>
          <QuoteValue>143.8亿</QuoteValue>
          <QuoteLabel>流通</QuoteLabel>
          <QuoteValue>141.5亿</QuoteValue>
          <QuoteLabel>市盈</QuoteLabel>
          <QuoteValue $end>52.18</QuoteValue>
        </QuoteGrid>
        <CornerMark />
      </Quote>

      <Diagnosis>
        <DiagnosisTag>诊断</DiagnosisTag>
        <DiagnosisText>露笑科技信息太多没重点？个股风向标为您...</DiagnosisText>
        <Close size={32} color="#999" push />
      </Diagnosis>
      <Band />

      <TabBar>
        <Tab>分时</Tab>
        <Tab>五日</Tab>
        <Tab $active>日K</Tab>
        <Tab>周K</Tab>
        <Tab>月K</Tab>
        <MoreTab>更多</MoreTab>
        <Caret $size={12} $gap={30} />
        <GearWrap>
          <Settings size={48} strokeWidth={1.5} />
        </GearWrap>
      </TabBar>

      <MaRow>
        <MaName>MA</MaName>
        <Caret $size={11} $gap={12} />
        <MaValue $color="#666" $gap={20}>5:7.51</MaValue>
        <Arrow up />
        <MaValue $color="#edb24f" $gap={25}>10:7.42</MaValue>
        <Arrow up />
        <MaValue $color="#a86fd8" $gap={24}>20:7.57</MaValue>
        <Arrow up={false} />
        <MaValue $color="#ef83c6" $gap={24}>60:7.45</MaValue>
        <Arrow up={false} />
        <ChipButton>筹</ChipButton>
        <RightButton>
          <InfoMark $size={30}>i</InfoMark>
          除权
        </RightButton>
      </MaRow>

      <PriceChart />
      <DateRow>
        <span>2025/04/09</span>
        <span>2025/07/03</span>
      </DateRow>

      <LegendRow $h={45} $size={28.5}>
        <IndicatorBox $w={211} $inset={4}>
          <InfoMark $size={30}>i</InfoMark>
          <IndicatorName>VOL(5,10)</IndicatorName>
          <Caret $size={11} $gap={4} />
        </IndicatorBox>
        <LegendText>VOL:30.20万 MA 5:41.49万</LegendText>
        <LegendText $color={ORANGE} $gap={12}>10:39.83万</LegendText>
      </LegendRow>
      <VolumeChart />

      <LegendRow $h={46} $size={30}>
        <IndicatorBox $w={242} $inset={10}>
          <IndicatorName>MACD(12,26,9)</IndicatorName>
          <Caret $size={11} $gap={4} />
        </IndicatorBox>
        <LegendText>DIFF:-0.06</LegendText>
        <LegendText $color={ORANGE} $gap={10}>DEA:-0.06</LegendText>
        <LegendText $color="#b626cf" $gap={10}>MACD:-0.00</LegendText>
      </LegendRow>
      <MacdChart />

      <ToolRow>
        <Tool>神奇九转</Tool>
        <Tool>D信号</Tool>
        <Tool>网格大师</Tool>
        <Tool>资金博弈</Tool>
        <ClippedTool>相似K线</ClippedTool>
        <SettingTool>设置</SettingTool>
      </ToolRow>
      <Notice>
        恭喜！您可申请交易提速特权，高峰期平均提速3倍...
        <Close size={30} color="#ccc" push />
      </Notice>
      <Band />
      <SubTabs>
        <SubTab $w={189}>超级L2</SubTab>
        <SubTab $w={145} $active>动态</SubTab>
        <SubTab $w={145}>机会</SubTab>
        <SubTab $w={148}>资金</SubTab>
        <SubTab $w={240}>资料(F10)</SubTab>
        <SubTab $w={145}>公告</SubTab>
        <SubTab $w={90}>研报</SubTab>
      </SubTabs>

      <IndexBar>
        <IndexName>深证成指</IndexName>
        <IndexFigure $first>10527.76</IndexFigure>
        <IndexFigure>+115.13</IndexFigure>
        <IndexFigure>+1.11%</IndexFigure>
        <UpMark />
      </IndexBar>

      <ActionBar>
        <TradeButton $color="#e8191b">买入</TradeButton>
        <TradeButton $color="#1272e6">卖出</TradeButton>
        <ActionItem $first>
          <ActionIcon width="48" height="48" viewBox="0 0 48 48" fill="none" stroke="#707070" strokeWidth="3.4" strokeLinecap="round">
            <rect x="2" y="2" width="44" height="44" rx="4" />
            <path d="M13 19h22M13 29h22" />
          </ActionIcon>
          持仓
        </ActionItem>
        <ActionItem>
          <ActionIcon width="48" height="48" viewBox="0 0 48 48" fill="none" stroke="#707070" strokeWidth="3.4" strokeLinecap="round" strokeLinejoin="round">
            <path d="M46 10V5a3 3 0 0 0-3-3H5a3 3 0 0 0-3 3v38a3 3 0 0 0 3 3h8" />
            <path d="M26 46h17a3 3 0 0 0 3-3V24H20" />
            <path d="M26 16l-7 8 8 8" />
          </ActionIcon>
          撤单
        </ActionItem>
        <ActionItem>
          <ActionIcon width="48" height="48" viewBox="0 0 48 48" fill="none" stroke="#707070" strokeWidth="3.4" strokeLinecap="round" strokeLinejoin="round">
            <path d="M16 2H5a3 3 0 0 0-3 3v37a3 3 0 0 0 3 3h37a3 3 0 0 0 3-3V28" />
            <path d="M19 27L45 3" />
            <path d="M27 2h18v18" />
          </ActionIcon>
          分享
        </ActionItem>
        <ActionItem>
          <ActionIcon width="48" height="48" viewBox="0 0 48 48" fill="none" stroke="#707070" strokeWidth="3.6" strokeLinecap="round">
            <path d="M2 6h3M2 22h3M2 38h3" />
            <path d="M15 6h31M15 22h31M15 38h31" />
          </ActionIcon>
          更多
        </ActionItem>
      </ActionBar>

      <Tip>
        <TipHead>
          <Robot size={54} />
          <TipTitle>发现主力筹码!</TipTitle>
        </TipHead>
        <TipDots>
          <i />
          <i />
          <i />
        </TipDots>
        <TipClose width="32" height="32" viewBox="0 0 32 32">
          <path d="M2 2L30 30M30 2L2 30" stroke="#fff" strokeWidth="3.5" />
        </TipClose>
        <TipBody>
          您关注的股票浩云科技利润环比总额
          <br />
          下降3.6倍，来看看主力筹码分布情
          <br />
          况吧~
        </TipBody>
      </Tip>
    </Page>
  );
}
